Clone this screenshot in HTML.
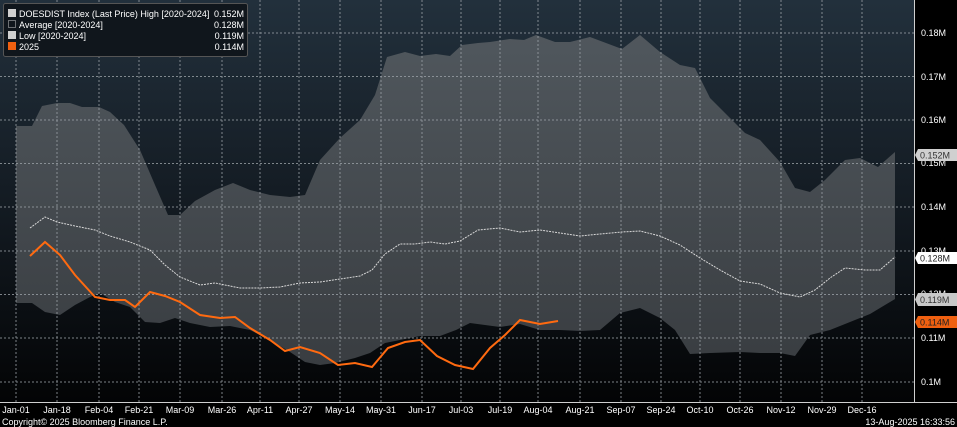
<!DOCTYPE html><html><head><style>
body{margin:0;width:957px;height:427px;overflow:hidden;background:#000;font-family:"Liberation Sans",sans-serif}
</style></head><body>
<svg width="957" height="427" xmlns="http://www.w3.org/2000/svg" style="position:absolute;left:0;top:0" font-family="Liberation Sans, sans-serif">
<defs>
<linearGradient id="bg" x1="0" y1="0" x2="0" y2="1"><stop offset="0" stop-color="#22303c"/><stop offset="0.55" stop-color="#121920"/><stop offset="1" stop-color="#030405"/></linearGradient>
<linearGradient id="band" x1="0" y1="0" x2="0" y2="1"><stop offset="0" stop-color="#50575d"/><stop offset="1" stop-color="#393d41"/></linearGradient>
</defs>
<rect x="0" y="0" width="914" height="402" fill="url(#bg)"/>
<polygon fill="url(#band)" points="16,126 32,126 42,106 57,103 70,103 82,107 99,107 110,112 124,125 140,150 155,185 168,215 180,215 195,201 215,190 233,183 250,190 270,195 290,197 305,195 320,160 340,138 360,120 375,95 387,57 405,52 420,56 436,54 450,56 462,45 478,43 490,42 510,39 524,40 536,35 555,42 570,42 590,37 606,43 622,49 640,35 660,52 680,65 695,68 710,98 730,118 745,133 760,140 780,162 795,188 810,192 825,180 845,160 860,158 878,167 895,152 895,299 870,314 850,322 830,330 810,335 795,356 780,353 760,353 740,352 710,353 690,354 675,330 660,318 640,308 620,313 600,330 580,331 560,330 540,330 520,324 500,327 485,325 470,323 456,330 440,336 420,336 400,340 385,343 370,353 355,358 335,363 320,365 305,362 290,352 270,340 250,330 230,326 210,327 190,323 175,318 160,323 145,322 130,307 115,302 100,293 90,297 75,305 60,315 45,312 32,303 16,303"/>
<g stroke="#9aa0a6" stroke-width="1" stroke-dasharray="2,2" opacity="0.8">
<line x1="0" y1="33" x2="914" y2="33"/><line x1="0" y1="76.5" x2="914" y2="76.5"/><line x1="0" y1="120" x2="914" y2="120"/><line x1="0" y1="163.5" x2="914" y2="163.5"/><line x1="0" y1="207" x2="914" y2="207"/><line x1="0" y1="251" x2="914" y2="251"/><line x1="0" y1="294.5" x2="914" y2="294.5"/><line x1="0" y1="338" x2="914" y2="338"/><line x1="0" y1="382" x2="914" y2="382"/>
<line x1="16" y1="0" x2="16" y2="402"/><line x1="57" y1="0" x2="57" y2="402"/><line x1="99" y1="0" x2="99" y2="402"/><line x1="139" y1="0" x2="139" y2="402"/><line x1="180" y1="0" x2="180" y2="402"/><line x1="222" y1="0" x2="222" y2="402"/><line x1="260" y1="0" x2="260" y2="402"/><line x1="299" y1="0" x2="299" y2="402"/><line x1="340" y1="0" x2="340" y2="402"/><line x1="381" y1="0" x2="381" y2="402"/><line x1="422" y1="0" x2="422" y2="402"/><line x1="461" y1="0" x2="461" y2="402"/><line x1="500" y1="0" x2="500" y2="402"/><line x1="538" y1="0" x2="538" y2="402"/><line x1="580" y1="0" x2="580" y2="402"/><line x1="621" y1="0" x2="621" y2="402"/><line x1="661" y1="0" x2="661" y2="402"/><line x1="700" y1="0" x2="700" y2="402"/><line x1="740" y1="0" x2="740" y2="402"/><line x1="781" y1="0" x2="781" y2="402"/><line x1="822" y1="0" x2="822" y2="402"/><line x1="862" y1="0" x2="862" y2="402"/>
</g>
<polyline fill="none" stroke="#d8d8d8" stroke-width="1" stroke-dasharray="2,1" points="30,228 45,217 57,222 75,226 95,230 110,236 130,242 150,250 165,265 180,277 200,285 215,283 240,288 260,288 280,287 300,283 320,282 340,279 360,276 372,270 385,254 400,244 415,244 430,242 445,244 460,241 478,230 500,228 520,232 540,230 560,233 580,236 600,234 622,232 640,231 660,236 680,245 700,258 720,270 740,281 760,284 780,293 800,297 815,290 830,278 845,268 865,270 880,270 895,257"/>
<polyline fill="none" stroke="#ff6a10" stroke-width="2" points="30,256 45,242 60,255 75,275 95,297 110,300 125,300 135,307 150,292 165,296 180,302 200,315 220,318 235,317 250,328 270,340 285,351 300,347 320,353 338,365 355,363 372,367 388,348 405,342 420,340 437,356 455,365 473,369 490,348 505,335 520,320 540,324 558,321"/>
<line x1="914.5" y1="0" x2="914.5" y2="402" stroke="#cfcfcf"/>
<line x1="0" y1="402.5" x2="957" y2="402.5" stroke="#cfcfcf"/>
<g fill="#fff" font-size="9">
<text x="921" y="36">0.18M</text><text x="921" y="80">0.17M</text><text x="921" y="123">0.16M</text><text x="921" y="166">0.15M</text><text x="921" y="210">0.14M</text><text x="921" y="254">0.13M</text><text x="921" y="297">0.12M</text><text x="921" y="341">0.11M</text><text x="921" y="385">0.1M</text>
</g>
<path d="M918,149 H957 V161 H918 L915,155Z" fill="#d0d0d0"/><text x="920" y="158.5" font-size="9" fill="#333">0.152M</text>
<path d="M918,252 H957 V264 H918 L915,258Z" fill="#ffffff"/><text x="920" y="261.5" font-size="9" fill="#222">0.128M</text>
<path d="M918,293 H957 V306 H918 L915,299.5Z" fill="#c8c8c8"/><text x="920" y="303" font-size="9" fill="#333">0.119M</text>
<path d="M918,316 H957 V328 H918 L915,322Z" fill="#f06010"/><text x="920" y="325.5" font-size="9" fill="#222">0.114M</text>
<g fill="#fff" font-size="9" text-anchor="middle">
<text x="16" y="413">Jan-01</text><text x="57" y="413">Jan-18</text><text x="99" y="413">Feb-04</text><text x="139" y="413">Feb-21</text><text x="180" y="413">Mar-09</text><text x="222" y="413">Mar-26</text><text x="260" y="413">Apr-11</text><text x="299" y="413">Apr-27</text><text x="340" y="413">May-14</text><text x="381" y="413">May-31</text><text x="422" y="413">Jun-17</text><text x="461" y="413">Jul-03</text><text x="500" y="413">Jul-19</text><text x="538" y="413">Aug-04</text><text x="580" y="413">Aug-21</text><text x="621" y="413">Sep-07</text><text x="661" y="413">Sep-24</text><text x="700" y="413">Oct-10</text><text x="740" y="413">Oct-26</text><text x="781" y="413">Nov-12</text><text x="822" y="413">Nov-29</text><text x="862" y="413">Dec-16</text>
</g>
<text x="2" y="425" font-size="9" fill="#fff">Copyright© 2025 Bloomberg Finance L.P.</text>
<text x="955" y="425" font-size="9" fill="#fff" text-anchor="end">13-Aug-2025 16:33:56</text>
<rect x="3.5" y="3.5" width="244" height="53" fill="#10161c" stroke="#555" rx="2"/>
<rect x="8" y="9" width="8" height="8" fill="#d0d0d0"/>
<rect x="8.5" y="20.5" width="7" height="7" fill="none" stroke="#ccc" stroke-dasharray="1,1"/>
<rect x="8" y="31" width="8" height="8" fill="#d0d0d0"/>
<rect x="8" y="42" width="8" height="8" fill="#f06010"/>
<g fill="#fff" font-size="9">
<text x="19" y="17">DOESDIST Index (Last Price) High [2020-2024]</text><text x="19" y="28">Average  [2020-2024]</text><text x="19" y="39">Low  [2020-2024]</text><text x="19" y="50">2025</text>
</g>
<g fill="#fff" font-size="9" text-anchor="end">
<text x="244" y="17">0.152M</text><text x="244" y="28">0.128M</text><text x="244" y="39">0.119M</text><text x="244" y="50">0.114M</text>
</g>
</svg>
</body></html>
